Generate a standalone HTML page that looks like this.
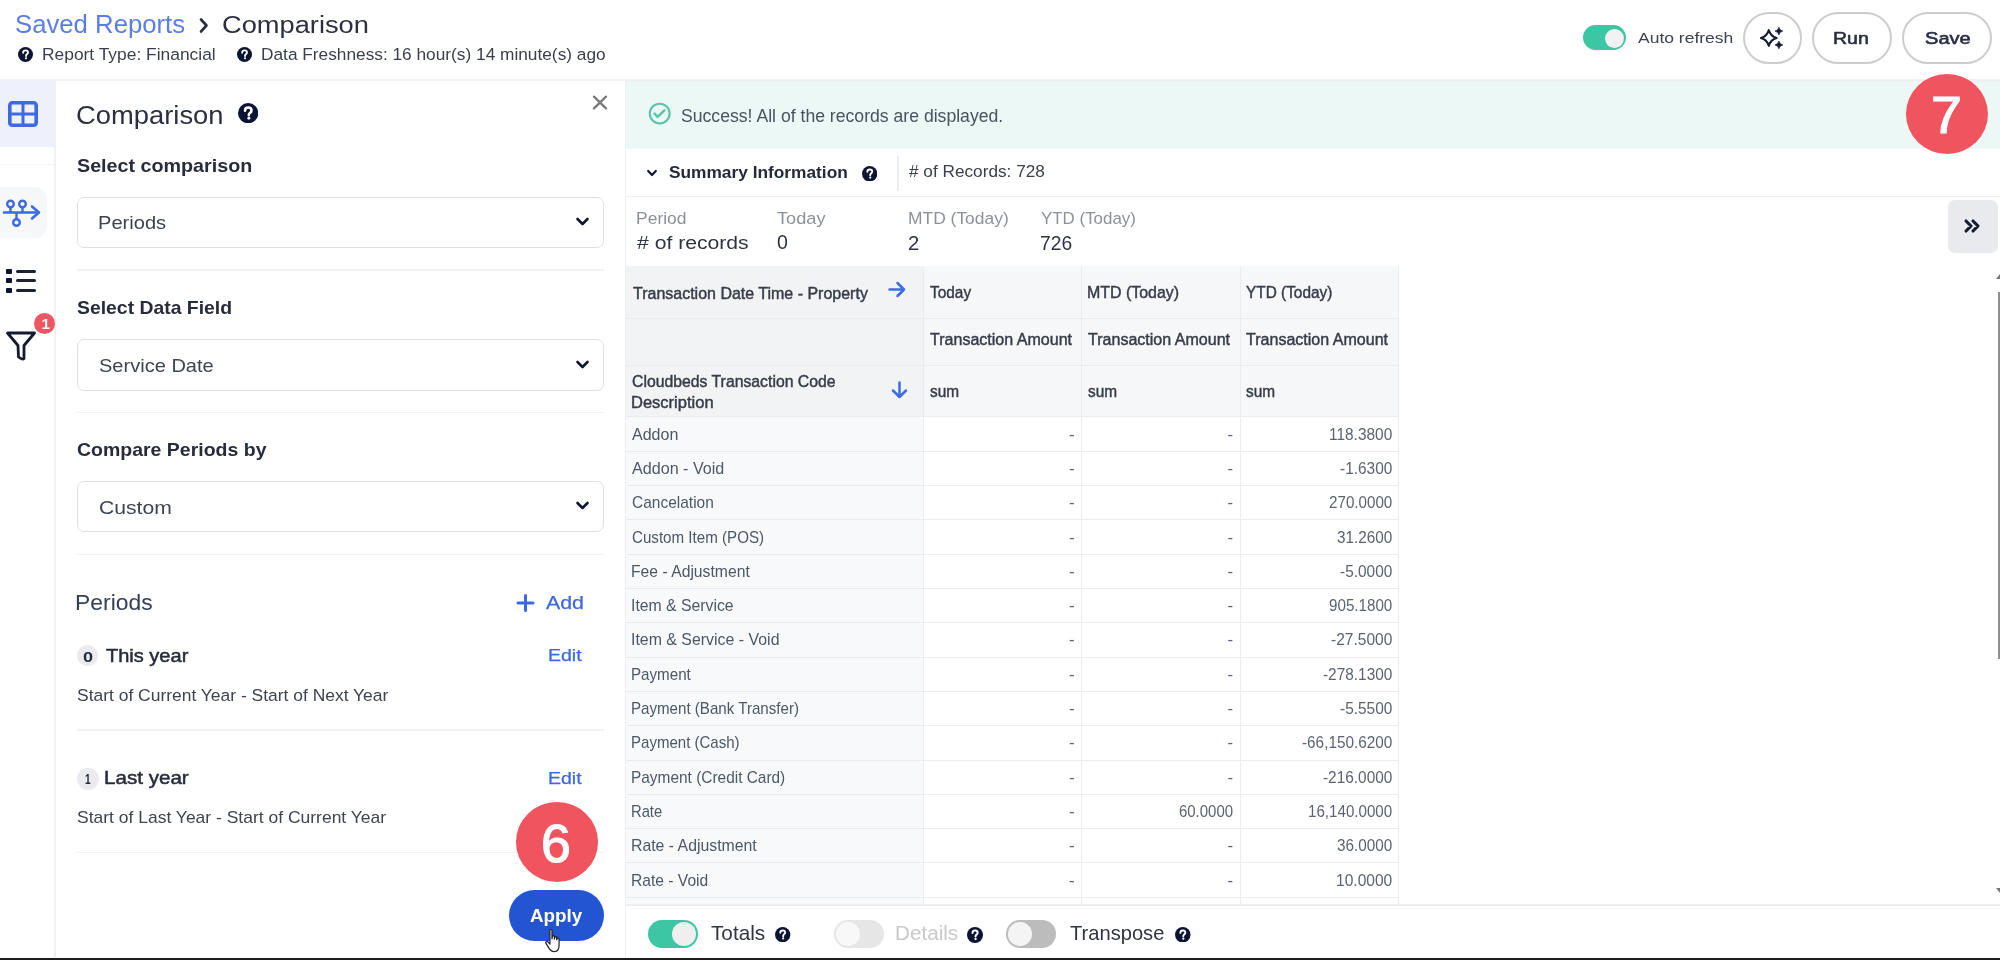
<!DOCTYPE html>
<html><head><meta charset="utf-8"><title>Comparison</title>
<style>
html,body{margin:0;padding:0;background:#fff;}
body{width:2000px;height:960px;position:relative;overflow:hidden;font-family:"Liberation Sans",sans-serif;}
#root{position:absolute;left:0;top:0;width:2000px;height:960px;filter:blur(0.45px);}
.t{position:absolute;white-space:nowrap;}
</style></head><body><div id="root">
<svg style="position:absolute;left:198px;top:17px" width="12" height="17" viewBox="0 0 12 17"><path d="M3 2.5 L8.5 8.5 L3 14.5" fill="none" stroke="#2a2f3b" stroke-width="2.6" stroke-linecap="round" stroke-linejoin="round"/></svg>
<svg style="position:absolute;left:18px;top:46.5px" width="15" height="15" viewBox="0 0 20 20">
<circle cx="10" cy="10" r="10" fill="#0b1433"/>
<path d="M6.9 7.6 C6.9 5.6 8.3 4.5 10.1 4.5 C12 4.5 13.3 5.6 13.3 7.3 C13.3 8.6 12.5 9.3 11.6 9.9 C10.9 10.4 10.7 10.7 10.7 11.5 L10.7 12" fill="none" stroke="#fff" stroke-width="2.5" stroke-linecap="round"/>
<circle cx="10.7" cy="15" r="1.45" fill="#fff"/>
</svg>
<svg style="position:absolute;left:236.5px;top:46.5px" width="15" height="15" viewBox="0 0 20 20">
<circle cx="10" cy="10" r="10" fill="#0b1433"/>
<path d="M6.9 7.6 C6.9 5.6 8.3 4.5 10.1 4.5 C12 4.5 13.3 5.6 13.3 7.3 C13.3 8.6 12.5 9.3 11.6 9.9 C10.9 10.4 10.7 10.7 10.7 11.5 L10.7 12" fill="none" stroke="#fff" stroke-width="2.5" stroke-linecap="round"/>
<circle cx="10.7" cy="15" r="1.45" fill="#fff"/>
</svg>
<div style="position:absolute;left:1583px;top:25px;width:43px;height:25px;background:#3cc6a4;border-radius:13px"></div>
<div style="position:absolute;left:1604.5px;top:28.5px;width:19.0px;height:19.0px;background:#f2f2f2;border-radius:50%"></div>
<div style="position:absolute;left:1743px;top:11.5px;width:59px;height:52.5px;border:2px solid #cdcdcd;border-radius:30px;box-sizing:border-box"></div>
<svg style="position:absolute;left:1757px;top:26px" width="28" height="26" viewBox="0 0 28 26">
<path d="M11.8 4.2 Q13.6 10.2 19.6 12 Q13.6 13.8 11.8 19.8 Q10 13.8 4 12 Q10 10.2 11.8 4.2 Z" fill="none" stroke="#141b33" stroke-width="2.2" stroke-linejoin="round"/>
<path d="M21.9 1.3 Q22.5 4.5 25.7 5.1 Q22.5 5.7 21.9 8.9 Q21.3 5.7 18.1 5.1 Q21.3 4.5 21.9 1.3 Z" fill="#141b33" stroke="#141b33" stroke-width="0.8" stroke-linejoin="round"/>
<path d="M21.9 15.1 Q22.5 18.3 25.7 18.9 Q22.5 19.5 21.9 22.7 Q21.3 19.5 18.1 18.9 Q21.3 18.3 21.9 15.1 Z" fill="#141b33" stroke="#141b33" stroke-width="0.8" stroke-linejoin="round"/>
</svg>
<div style="position:absolute;left:1811.5px;top:11.5px;width:80.0px;height:52.5px;border:2px solid #cdcdcd;border-radius:27px;box-sizing:border-box"></div>
<div style="position:absolute;left:1902px;top:11.5px;width:89.5px;height:52.5px;border:2px solid #cdcdcd;border-radius:27px;box-sizing:border-box"></div>
<div style="position:absolute;left:0px;top:79px;width:2000px;height:2px;background:#f1f2f4"></div>
<div style="position:absolute;left:0px;top:81px;width:54px;height:66px;background:#eef1fb"></div>
<div style="position:absolute;left:54px;top:81px;width:1.5px;height:876px;background:#f0f1f3"></div>
<div style="position:absolute;left:0px;top:163.5px;width:54px;height:1.5px;background:#f2f3f5"></div>
<svg style="position:absolute;left:7px;top:100px" width="32" height="28" viewBox="0 0 32 28">
<rect x="2.8" y="2.8" width="26.4" height="22.4" rx="2.5" fill="none" stroke="#3d6ae3" stroke-width="3.6"/>
<line x1="16" y1="3" x2="16" y2="25" stroke="#3d6ae3" stroke-width="3"/>
<line x1="3" y1="14" x2="29" y2="14" stroke="#3d6ae3" stroke-width="3"/>
</svg>
<div style="position:absolute;left:0px;top:187px;width:47px;height:51px;background:#f6f7f9;border-radius:0 12px 12px 0"></div>
<svg style="position:absolute;left:2px;top:198px" width="40" height="32" viewBox="0 0 40 32">
<line x1="2" y1="14.5" x2="36" y2="14.5" stroke="#3d6ae3" stroke-width="2.6" stroke-linecap="round"/>
<path d="M30 8.5 L37 14.5 L30 20.5" fill="none" stroke="#3d6ae3" stroke-width="2.6" stroke-linecap="round" stroke-linejoin="round"/>
<circle cx="8.5" cy="6" r="3.3" fill="none" stroke="#3d6ae3" stroke-width="2.4"/>
<circle cx="20.5" cy="6" r="3.3" fill="none" stroke="#3d6ae3" stroke-width="2.4"/>
<circle cx="14.5" cy="24.5" r="3.3" fill="none" stroke="#3d6ae3" stroke-width="2.4"/>
<line x1="8.5" y1="9" x2="8.5" y2="14.5" stroke="#3d6ae3" stroke-width="2.4"/>
<line x1="20.5" y1="9" x2="20.5" y2="14.5" stroke="#3d6ae3" stroke-width="2.4"/>
<line x1="14.5" y1="14.5" x2="14.5" y2="21" stroke="#3d6ae3" stroke-width="2.4"/>
</svg>
<div style="position:absolute;left:6px;top:268.5px;width:5.5px;height:5.0px;background:#0d1430;border-radius:1px"></div>
<div style="position:absolute;left:15.5px;top:269.5px;width:20.5px;height:3.0px;background:#1b2236;border-radius:1.5px"></div>
<div style="position:absolute;left:6px;top:277.5px;width:5.5px;height:5.0px;background:#0d1430;border-radius:1px"></div>
<div style="position:absolute;left:15.5px;top:278.5px;width:20.5px;height:3.0px;background:#1b2236;border-radius:1.5px"></div>
<div style="position:absolute;left:6px;top:287.5px;width:5.5px;height:5.0px;background:#0d1430;border-radius:1px"></div>
<div style="position:absolute;left:15.5px;top:288.5px;width:20.5px;height:3.0px;background:#1b2236;border-radius:1.5px"></div>
<svg style="position:absolute;left:5px;top:330px" width="32" height="32" viewBox="0 0 32 32">
<path d="M2.5 3 L29.5 3 L19 15.5 L19 28.5 Q17.5 30 13.5 27 L13 15.5 Z" fill="none" stroke="#141b30" stroke-width="2.8" stroke-linejoin="round"/>
</svg>
<div style="position:absolute;left:33.8px;top:312.8px;width:21.0px;height:21.0px;background:#ee5661;border-radius:50%"></div>
<svg style="position:absolute;left:237.6px;top:102.5px" width="20.3" height="20.3" viewBox="0 0 20 20">
<circle cx="10" cy="10" r="10" fill="#0b1433"/>
<path d="M6.9 7.6 C6.9 5.6 8.3 4.5 10.1 4.5 C12 4.5 13.3 5.6 13.3 7.3 C13.3 8.6 12.5 9.3 11.6 9.9 C10.9 10.4 10.7 10.7 10.7 11.5 L10.7 12" fill="none" stroke="#fff" stroke-width="2.5" stroke-linecap="round"/>
<circle cx="10.7" cy="15" r="1.45" fill="#fff"/>
</svg>
<svg style="position:absolute;left:591px;top:94px" width="17" height="16" viewBox="0 0 17 16"><path d="M3 2.6 L15 14.4 M15 2.6 L3 14.4" stroke="#7a7a7c" stroke-width="2.3" stroke-linecap="round"/></svg>
<div style="position:absolute;left:76.5px;top:196.5px;width:527.0px;height:51.5px;border:1.5px solid #dfe0e3;border-radius:7px;box-sizing:border-box"></div>
<svg style="position:absolute;left:575px;top:216.2px" width="15" height="11" viewBox="0 0 15 11"><path d="M2.5 3 L7.5 8 L12.5 3" fill="none" stroke="#101733" stroke-width="2.6" stroke-linecap="round" stroke-linejoin="round"/></svg>
<div style="position:absolute;left:77px;top:269.25px;width:527px;height:1.5px;background:#f1f2f4"></div>
<div style="position:absolute;left:76.5px;top:338.5px;width:527.0px;height:52.5px;border:1.5px solid #dfe0e3;border-radius:7px;box-sizing:border-box"></div>
<svg style="position:absolute;left:575px;top:358.8px" width="15" height="11" viewBox="0 0 15 11"><path d="M2.5 3 L7.5 8 L12.5 3" fill="none" stroke="#101733" stroke-width="2.6" stroke-linecap="round" stroke-linejoin="round"/></svg>
<div style="position:absolute;left:77px;top:411.85px;width:527px;height:1.5px;background:#f1f2f4"></div>
<div style="position:absolute;left:76.5px;top:480.6px;width:527.0px;height:51.60000000000002px;border:1.5px solid #dfe0e3;border-radius:7px;box-sizing:border-box"></div>
<svg style="position:absolute;left:575px;top:500.4px" width="15" height="11" viewBox="0 0 15 11"><path d="M2.5 3 L7.5 8 L12.5 3" fill="none" stroke="#101733" stroke-width="2.6" stroke-linecap="round" stroke-linejoin="round"/></svg>
<div style="position:absolute;left:77px;top:553.65px;width:527px;height:1.5px;background:#f1f2f4"></div>
<svg style="position:absolute;left:516px;top:594px" width="19" height="18" viewBox="0 0 19 18"><path d="M9.5 1.5 L9.5 16.5 M2 9 L17 9" stroke="#3d66e4" stroke-width="3" stroke-linecap="round"/></svg>
<div style="position:absolute;left:77px;top:645px;width:21.299999999999997px;height:21px;background:#ebebef;border-radius:50%"></div>
<div style="position:absolute;left:77px;top:729px;width:527px;height:1.5px;background:#f1f2f4"></div>
<div style="position:absolute;left:77px;top:767.6px;width:21.700000000000003px;height:22.399999999999977px;background:#ebebef;border-radius:50%"></div>
<div style="position:absolute;left:77px;top:851.5px;width:527px;height:1.5px;background:#f1f2f4"></div>
<div style="position:absolute;left:508.6px;top:890px;width:95.60000000000002px;height:51.39999999999998px;background:#2355d3;border-radius:26px"></div>
<div style="position:absolute;left:624.5px;top:81px;width:1.5px;height:876px;background:#eceef0"></div>
<div style="position:absolute;left:626px;top:79.5px;width:1374px;height:2.5px;background:#eff0f1"></div>
<div style="position:absolute;left:626px;top:82px;width:1374px;height:67px;background:#ebf8f5"></div>
<svg style="position:absolute;left:647.5px;top:102.3px" width="24" height="24" viewBox="0 0 24 24"><circle cx="11.7" cy="11.6" r="9.9" fill="none" stroke="#5cc3aa" stroke-width="2.1"/><path d="M6.6 11.6 L9.6 14.9 L16.4 8.4" fill="none" stroke="#5cc3aa" stroke-width="2.5" stroke-linecap="round" stroke-linejoin="round"/></svg>
<svg style="position:absolute;left:646px;top:168px" width="12" height="11" viewBox="0 0 12 11"><path d="M2.2 3 L6 7 L9.8 3" fill="none" stroke="#141b33" stroke-width="2.3" stroke-linecap="round" stroke-linejoin="round"/></svg>
<svg style="position:absolute;left:861.8px;top:166px" width="15.4" height="15.4" viewBox="0 0 20 20">
<circle cx="10" cy="10" r="10" fill="#0b1433"/>
<path d="M6.9 7.6 C6.9 5.6 8.3 4.5 10.1 4.5 C12 4.5 13.3 5.6 13.3 7.3 C13.3 8.6 12.5 9.3 11.6 9.9 C10.9 10.4 10.7 10.7 10.7 11.5 L10.7 12" fill="none" stroke="#fff" stroke-width="2.5" stroke-linecap="round"/>
<circle cx="10.7" cy="15" r="1.45" fill="#fff"/>
</svg>
<div style="position:absolute;left:897px;top:155.6px;width:1.5px;height:35.70000000000002px;background:#ececee"></div>
<div style="position:absolute;left:626px;top:195.5px;width:1374px;height:1.5px;background:#eeeff1"></div>
<div style="position:absolute;left:1948px;top:200px;width:50px;height:53px;background:#e9eaee;border-radius:7px"></div>
<svg style="position:absolute;left:1963px;top:218px" width="19" height="16" viewBox="0 0 19 16"><path d="M3 3 L8 8 L3 13 M10 3 L15 8 L10 13" fill="none" stroke="#141b33" stroke-width="3.1" stroke-linecap="round" stroke-linejoin="round"/></svg>
<div style="position:absolute;left:625.5px;top:266px;width:772.5px;height:151px;background:#f6f7f9"></div>
<div style="position:absolute;left:625.5px;top:266px;width:297.5px;height:151px;background:#f2f3f5"></div>
<div style="position:absolute;left:625.5px;top:417px;width:297.5px;height:488px;background:#f8f9fb"></div>
<div style="position:absolute;left:625.5px;top:317.5px;width:772.5px;height:1.0px;background:#eaecef"></div>
<div style="position:absolute;left:625.5px;top:364.5px;width:772.5px;height:1.0px;background:#eaecef"></div>
<div style="position:absolute;left:625.5px;top:416.0px;width:772.5px;height:1.0px;background:#eaecef"></div>
<div style="position:absolute;left:625.5px;top:450.8px;width:772.5px;height:1.0px;background:#eaecef"></div>
<div style="position:absolute;left:625.5px;top:485.1px;width:772.5px;height:1.0px;background:#eaecef"></div>
<div style="position:absolute;left:625.5px;top:519.4px;width:772.5px;height:1.0px;background:#eaecef"></div>
<div style="position:absolute;left:625.5px;top:553.7px;width:772.5px;height:1.0px;background:#eaecef"></div>
<div style="position:absolute;left:625.5px;top:588.0px;width:772.5px;height:1.0px;background:#eaecef"></div>
<div style="position:absolute;left:625.5px;top:622.3px;width:772.5px;height:1.0px;background:#eaecef"></div>
<div style="position:absolute;left:625.5px;top:656.5999999999999px;width:772.5px;height:1.0px;background:#eaecef"></div>
<div style="position:absolute;left:625.5px;top:690.9px;width:772.5px;height:1.0px;background:#eaecef"></div>
<div style="position:absolute;left:625.5px;top:725.2px;width:772.5px;height:1.0px;background:#eaecef"></div>
<div style="position:absolute;left:625.5px;top:759.5px;width:772.5px;height:1.0px;background:#eaecef"></div>
<div style="position:absolute;left:625.5px;top:793.8px;width:772.5px;height:1.0px;background:#eaecef"></div>
<div style="position:absolute;left:625.5px;top:828.0999999999999px;width:772.5px;height:1.0px;background:#eaecef"></div>
<div style="position:absolute;left:625.5px;top:862.4px;width:772.5px;height:1.0px;background:#eaecef"></div>
<div style="position:absolute;left:625.5px;top:896.6999999999999px;width:772.5px;height:1.0px;background:#eaecef"></div>
<div style="position:absolute;left:922.5px;top:266px;width:1.0px;height:639px;background:#eaecef"></div>
<div style="position:absolute;left:1080.5px;top:266px;width:1.0px;height:639px;background:#eaecef"></div>
<div style="position:absolute;left:1239.5px;top:266px;width:1.0px;height:639px;background:#eaecef"></div>
<div style="position:absolute;left:1397.5px;top:266px;width:1.0px;height:639px;background:#eaecef"></div>
<svg style="position:absolute;left:886px;top:280px" width="21" height="19" viewBox="0 0 21 19"><path d="M3.5 9.5 L18 9.5 M11.5 3 L18 9.5 L11.5 16" fill="none" stroke="#3d6de6" stroke-width="2.5" stroke-linecap="round" stroke-linejoin="round"/></svg>
<svg style="position:absolute;left:890px;top:379px" width="19" height="21" viewBox="0 0 19 21"><path d="M9.5 3.5 L9.5 18 M3 11.5 L9.5 18 L16 11.5" fill="none" stroke="#3d6de6" stroke-width="2.5" stroke-linecap="round" stroke-linejoin="round"/></svg>
<div style="position:absolute;left:626px;top:904px;width:1374px;height:1.5px;background:#eceef0"></div>
<div style="position:absolute;left:647.7px;top:920px;width:50.299999999999955px;height:28.299999999999955px;background:#3cc6a4;border-radius:15px"></div>
<div style="position:absolute;left:672.3px;top:922.3px;width:24.0px;height:24.0px;background:#efefef;border-radius:50%"></div>
<svg style="position:absolute;left:775.3px;top:926.5px" width="15.3" height="15.3" viewBox="0 0 20 20">
<circle cx="10" cy="10" r="10" fill="#0b1433"/>
<path d="M6.9 7.6 C6.9 5.6 8.3 4.5 10.1 4.5 C12 4.5 13.3 5.6 13.3 7.3 C13.3 8.6 12.5 9.3 11.6 9.9 C10.9 10.4 10.7 10.7 10.7 11.5 L10.7 12" fill="none" stroke="#fff" stroke-width="2.5" stroke-linecap="round"/>
<circle cx="10.7" cy="15" r="1.45" fill="#fff"/>
</svg>
<div style="position:absolute;left:833.6px;top:920px;width:50.0px;height:28px;background:#e6e6e6;border-radius:14px"></div>
<div style="position:absolute;left:836px;top:922.2px;width:23.600000000000023px;height:23.59999999999991px;background:#f8f8f8;border-radius:50%"></div>
<svg style="position:absolute;left:967px;top:926.5px" width="16" height="16" viewBox="0 0 20 20">
<circle cx="10" cy="10" r="10" fill="#0b1433"/>
<path d="M6.9 7.6 C6.9 5.6 8.3 4.5 10.1 4.5 C12 4.5 13.3 5.6 13.3 7.3 C13.3 8.6 12.5 9.3 11.6 9.9 C10.9 10.4 10.7 10.7 10.7 11.5 L10.7 12" fill="none" stroke="#fff" stroke-width="2.5" stroke-linecap="round"/>
<circle cx="10.7" cy="15" r="1.45" fill="#fff"/>
</svg>
<div style="position:absolute;left:1006px;top:920px;width:50px;height:28px;background:#bcbcbc;border-radius:14px"></div>
<div style="position:absolute;left:1008.4px;top:922.2px;width:23.600000000000023px;height:23.59999999999991px;background:#f4f4f4;border-radius:50%"></div>
<svg style="position:absolute;left:1175px;top:926.5px" width="15.5" height="15.5" viewBox="0 0 20 20">
<circle cx="10" cy="10" r="10" fill="#0b1433"/>
<path d="M6.9 7.6 C6.9 5.6 8.3 4.5 10.1 4.5 C12 4.5 13.3 5.6 13.3 7.3 C13.3 8.6 12.5 9.3 11.6 9.9 C10.9 10.4 10.7 10.7 10.7 11.5 L10.7 12" fill="none" stroke="#fff" stroke-width="2.5" stroke-linecap="round"/>
<circle cx="10.7" cy="15" r="1.45" fill="#fff"/>
</svg>
<div style="position:absolute;left:1997.5px;top:292px;width:2.5px;height:367px;background:#8e8e8e"></div>
<svg style="position:absolute;left:1994px;top:273px" width="6" height="8" viewBox="0 0 6 8"><path d="M6 1 L2 6 L6 6 Z" fill="#777"/></svg>
<svg style="position:absolute;left:1994px;top:886px" width="6" height="8" viewBox="0 0 6 8"><path d="M6 7 L2 2 L6 2 Z" fill="#777"/></svg>
<div style="position:absolute;left:0px;top:957.5px;width:2000px;height:2.5px;background:#1c1c1c"></div>
<div class="t" style="left:14.57px;top:11.81px;font-size:24.93px;line-height:24.93px;font-weight:400;color:#5b7de6;transform:scaleX(1.0319);transform-origin:0 0;">Saved Reports</div>
<div class="t" style="left:221.89px;top:12.52px;font-size:24.64px;line-height:24.64px;font-weight:400;color:#2a3040;transform:scaleX(1.1064);transform-origin:0 0;">Comparison</div>
<div class="t" style="left:41.61px;top:47.01px;font-size:15.94px;line-height:15.94px;font-weight:400;color:#3a3f4b;transform:scaleX(1.0911);transform-origin:0 0;">Report Type: Financial</div>
<div class="t" style="left:260.92px;top:46.76px;font-size:15.94px;line-height:15.94px;font-weight:400;color:#3a3f4b;transform:scaleX(1.0837);transform-origin:0 0;">Data Freshness: 16 hour(s) 14 minute(s) ago</div>
<div class="t" style="left:1637.80px;top:30.61px;font-size:14.78px;line-height:14.78px;font-weight:400;color:#3b4250;transform:scaleX(1.1842);transform-origin:0 0;">Auto refresh</div>
<div class="t" style="left:1833.37px;top:30.01px;font-size:17.39px;line-height:17.39px;font-weight:400;color:#283044;transform:scaleX(1.1254);transform-origin:0 0;-webkit-text-stroke:0.6px #283044;">Run</div>
<div class="t" style="left:1924.50px;top:30.01px;font-size:17.39px;line-height:17.39px;font-weight:400;color:#283044;transform:scaleX(1.1556);transform-origin:0 0;-webkit-text-stroke:0.6px #283044;">Save</div>
<div class="t" style="left:41.50px;top:315.51px;font-size:15.22px;line-height:15.22px;font-weight:700;color:#fff;">1</div>
<div class="t" style="left:76.10px;top:102.51px;font-size:24.93px;line-height:24.93px;font-weight:400;color:#2a3040;transform:scaleX(1.0980);transform-origin:0 0;">Comparison</div>
<div class="t" style="left:77.00px;top:156.01px;font-size:19.13px;line-height:19.13px;font-weight:700;color:#262c3a;transform:scaleX(1.0314);transform-origin:0 0;">Select comparison</div>
<div class="t" style="left:97.73px;top:214.00px;font-size:18.84px;line-height:18.84px;font-weight:400;color:#3d4451;transform:scaleX(1.0669);transform-origin:0 0;">Periods</div>
<div class="t" style="left:77.00px;top:298.41px;font-size:19.13px;line-height:19.13px;font-weight:700;color:#262c3a;transform:scaleX(1.0140);transform-origin:0 0;">Select Data Field</div>
<div class="t" style="left:98.80px;top:356.81px;font-size:18.84px;line-height:18.84px;font-weight:400;color:#3d4451;transform:scaleX(1.0642);transform-origin:0 0;">Service Date</div>
<div class="t" style="left:77.00px;top:440.41px;font-size:19.13px;line-height:19.13px;font-weight:700;color:#262c3a;transform:scaleX(1.0196);transform-origin:0 0;">Compare Periods by</div>
<div class="t" style="left:98.80px;top:498.81px;font-size:18.84px;line-height:18.84px;font-weight:400;color:#3d4451;transform:scaleX(1.1218);transform-origin:0 0;">Custom</div>
<div class="t" style="left:75.37px;top:592.31px;font-size:22.17px;line-height:22.17px;font-weight:400;color:#344054;transform:scaleX(1.0345);transform-origin:0 0;">Periods</div>
<div class="t" style="left:545.60px;top:594.00px;font-size:18.12px;line-height:18.12px;font-weight:400;color:#3d66e4;transform:scaleX(1.1782);transform-origin:0 0;-webkit-text-stroke:0.25px #3d66e4;">Add</div>
<div class="t" style="left:83.40px;top:649.91px;font-size:14.93px;line-height:14.93px;font-weight:700;color:#262c3a;transform:scaleX(1.2125);transform-origin:0 0;">0</div>
<div class="t" style="left:106.00px;top:647.00px;font-size:18.84px;line-height:18.84px;font-weight:400;color:#262c3a;transform:scaleX(1.0628);transform-origin:0 0;-webkit-text-stroke:0.5px #262c3a;">This year</div>
<div class="t" style="left:548.35px;top:648.40px;font-size:16.96px;line-height:16.96px;font-weight:400;color:#3d66e4;transform:scaleX(1.1517);transform-origin:0 0;-webkit-text-stroke:0.25px #3d66e4;">Edit</div>
<div class="t" style="left:76.60px;top:688.01px;font-size:16.67px;line-height:16.67px;font-weight:400;color:#3d4350;transform:scaleX(1.0474);transform-origin:0 0;">Start of Current Year - Start of Next Year</div>
<div class="t" style="left:85.20px;top:772.00px;font-size:14.93px;line-height:14.93px;font-weight:700;color:#262c3a;transform:scaleX(0.6750);transform-origin:0 0;">1</div>
<div class="t" style="left:104.31px;top:769.20px;font-size:18.84px;line-height:18.84px;font-weight:400;color:#262c3a;transform:scaleX(1.0935);transform-origin:0 0;-webkit-text-stroke:0.5px #262c3a;">Last year</div>
<div class="t" style="left:548.35px;top:770.81px;font-size:16.96px;line-height:16.96px;font-weight:400;color:#3d66e4;transform:scaleX(1.1517);transform-origin:0 0;-webkit-text-stroke:0.25px #3d66e4;">Edit</div>
<div class="t" style="left:76.60px;top:810.40px;font-size:16.96px;line-height:16.96px;font-weight:400;color:#3d4350;transform:scaleX(1.0324);transform-origin:0 0;">Start of Last Year - Start of Current Year</div>
<div class="t" style="left:529.80px;top:907.00px;font-size:18.12px;line-height:18.12px;font-weight:700;color:#ffffff;transform:scaleX(1.0392);transform-origin:0 0;">Apply</div>
<div class="t" style="left:681.30px;top:107.51px;font-size:17.68px;line-height:17.68px;font-weight:400;color:#4a5260;transform:scaleX(0.9971);transform-origin:0 0;">Success! All of the records are displayed.</div>
<div class="t" style="left:668.50px;top:165.01px;font-size:15.94px;line-height:15.94px;font-weight:700;color:#232a3b;transform:scaleX(1.0855);transform-origin:0 0;">Summary Information</div>
<div class="t" style="left:909.40px;top:163.30px;font-size:17.39px;line-height:17.39px;font-weight:400;color:#3a404c;transform:scaleX(0.9906);transform-origin:0 0;"># of Records: 728</div>
<div class="t" style="left:635.70px;top:211.40px;font-size:15.94px;line-height:15.94px;font-weight:400;color:#8b909b;transform:scaleX(1.0971);transform-origin:0 0;">Period</div>
<div class="t" style="left:777.30px;top:211.40px;font-size:15.94px;line-height:15.94px;font-weight:400;color:#8b909b;transform:scaleX(1.1396);transform-origin:0 0;">Today</div>
<div class="t" style="left:907.61px;top:211.40px;font-size:15.94px;line-height:15.94px;font-weight:400;color:#8b909b;transform:scaleX(1.0938);transform-origin:0 0;">MTD (Today)</div>
<div class="t" style="left:1041.00px;top:211.40px;font-size:15.94px;line-height:15.94px;font-weight:400;color:#8b909b;transform:scaleX(1.0613);transform-origin:0 0;">YTD (Today)</div>
<div class="t" style="left:637.00px;top:234.20px;font-size:18.12px;line-height:18.12px;font-weight:400;color:#2e3441;transform:scaleX(1.1678);transform-origin:0 0;"># of records</div>
<div class="t" style="left:777.00px;top:233.21px;font-size:19.57px;line-height:19.57px;font-weight:400;color:#2e3441;">0</div>
<div class="t" style="left:908.00px;top:233.01px;font-size:20.29px;line-height:20.29px;font-weight:400;color:#2e3441;">2</div>
<div class="t" style="left:1040.05px;top:233.01px;font-size:20.29px;line-height:20.29px;font-weight:400;color:#2e3441;transform:scaleX(0.9496);transform-origin:0 0;">726</div>
<div class="t" style="left:632.50px;top:285.51px;font-size:16.67px;line-height:16.67px;font-weight:400;color:#363c48;transform:scaleX(0.9599);transform-origin:0 0;-webkit-text-stroke:0.45px #363c48;">Transaction Date Time - Property</div>
<div class="t" style="left:930.20px;top:284.51px;font-size:16.67px;line-height:16.67px;font-weight:400;color:#363c48;transform:scaleX(0.9242);transform-origin:0 0;-webkit-text-stroke:0.45px #363c48;">Today</div>
<div class="t" style="left:1087.04px;top:284.51px;font-size:16.67px;line-height:16.67px;font-weight:400;color:#363c48;transform:scaleX(0.9567);transform-origin:0 0;-webkit-text-stroke:0.45px #363c48;">MTD (Today)</div>
<div class="t" style="left:1246.20px;top:284.51px;font-size:16.67px;line-height:16.67px;font-weight:400;color:#363c48;transform:scaleX(0.9232);transform-origin:0 0;-webkit-text-stroke:0.45px #363c48;">YTD (Today)</div>
<div class="t" style="left:930.00px;top:332.41px;font-size:16.67px;line-height:16.67px;font-weight:400;color:#363c48;transform:scaleX(0.9630);transform-origin:0 0;-webkit-text-stroke:0.45px #363c48;">Transaction Amount</div>
<div class="t" style="left:930.00px;top:383.51px;font-size:16.67px;line-height:16.67px;font-weight:400;color:#363c48;transform:scaleX(0.9251);transform-origin:0 0;-webkit-text-stroke:0.45px #363c48;">sum</div>
<div class="t" style="left:1088.00px;top:332.41px;font-size:16.67px;line-height:16.67px;font-weight:400;color:#363c48;transform:scaleX(0.9630);transform-origin:0 0;-webkit-text-stroke:0.45px #363c48;">Transaction Amount</div>
<div class="t" style="left:1088.00px;top:383.51px;font-size:16.67px;line-height:16.67px;font-weight:400;color:#363c48;transform:scaleX(0.9251);transform-origin:0 0;-webkit-text-stroke:0.45px #363c48;">sum</div>
<div class="t" style="left:1246.00px;top:332.41px;font-size:16.67px;line-height:16.67px;font-weight:400;color:#363c48;transform:scaleX(0.9630);transform-origin:0 0;-webkit-text-stroke:0.45px #363c48;">Transaction Amount</div>
<div class="t" style="left:1246.00px;top:383.51px;font-size:16.67px;line-height:16.67px;font-weight:400;color:#363c48;transform:scaleX(0.9251);transform-origin:0 0;-webkit-text-stroke:0.45px #363c48;">sum</div>
<div class="t" style="left:632.00px;top:374.01px;font-size:16.67px;line-height:16.67px;font-weight:400;color:#363c48;transform:scaleX(0.9476);transform-origin:0 0;-webkit-text-stroke:0.45px #363c48;">Cloudbeds Transaction Code</div>
<div class="t" style="left:631.01px;top:395.01px;font-size:16.67px;line-height:16.67px;font-weight:400;color:#363c48;transform:scaleX(0.9909);transform-origin:0 0;-webkit-text-stroke:0.45px #363c48;">Description</div>
<div class="t" style="left:632.00px;top:426.61px;font-size:16.81px;line-height:16.81px;font-weight:400;color:#4b5868;transform:scaleX(0.9538);transform-origin:0 0;">Addon</div>
<div class="t" style="left:1069.00px;top:426.61px;font-size:16.81px;line-height:16.81px;font-weight:400;color:#5a6472;">-</div>
<div class="t" style="left:1227.50px;top:426.61px;font-size:16.81px;line-height:16.81px;font-weight:400;color:#5a6472;">-</div>
<div class="t" style="left:1329.08px;top:426.61px;font-size:16.81px;line-height:16.81px;font-weight:400;color:#5a6472;transform:scaleX(0.9189);transform-origin:0 0;">118.3800</div>
<div class="t" style="left:632.00px;top:460.91px;font-size:16.81px;line-height:16.81px;font-weight:400;color:#4b5868;transform:scaleX(0.9599);transform-origin:0 0;">Addon - Void</div>
<div class="t" style="left:1069.00px;top:460.91px;font-size:16.81px;line-height:16.81px;font-weight:400;color:#5a6472;">-</div>
<div class="t" style="left:1227.50px;top:460.91px;font-size:16.81px;line-height:16.81px;font-weight:400;color:#5a6472;">-</div>
<div class="t" style="left:1340.00px;top:460.91px;font-size:16.81px;line-height:16.81px;font-weight:400;color:#5a6472;transform:scaleX(0.9183);transform-origin:0 0;">-1.6300</div>
<div class="t" style="left:632.00px;top:495.20px;font-size:16.81px;line-height:16.81px;font-weight:400;color:#4b5868;transform:scaleX(0.9223);transform-origin:0 0;">Cancelation</div>
<div class="t" style="left:1069.00px;top:495.20px;font-size:16.81px;line-height:16.81px;font-weight:400;color:#5a6472;">-</div>
<div class="t" style="left:1227.50px;top:495.20px;font-size:16.81px;line-height:16.81px;font-weight:400;color:#5a6472;">-</div>
<div class="t" style="left:1329.00px;top:495.20px;font-size:16.81px;line-height:16.81px;font-weight:400;color:#5a6472;transform:scaleX(0.9037);transform-origin:0 0;">270.0000</div>
<div class="t" style="left:632.00px;top:529.50px;font-size:16.81px;line-height:16.81px;font-weight:400;color:#4b5868;transform:scaleX(0.9011);transform-origin:0 0;">Custom Item (POS)</div>
<div class="t" style="left:1069.00px;top:529.50px;font-size:16.81px;line-height:16.81px;font-weight:400;color:#5a6472;">-</div>
<div class="t" style="left:1227.50px;top:529.50px;font-size:16.81px;line-height:16.81px;font-weight:400;color:#5a6472;">-</div>
<div class="t" style="left:1337.00px;top:529.50px;font-size:16.81px;line-height:16.81px;font-weight:400;color:#5a6472;transform:scaleX(0.9110);transform-origin:0 0;">31.2600</div>
<div class="t" style="left:631.06px;top:563.81px;font-size:16.81px;line-height:16.81px;font-weight:400;color:#4b5868;transform:scaleX(0.9353);transform-origin:0 0;">Fee - Adjustment</div>
<div class="t" style="left:1069.00px;top:563.81px;font-size:16.81px;line-height:16.81px;font-weight:400;color:#5a6472;">-</div>
<div class="t" style="left:1227.50px;top:563.81px;font-size:16.81px;line-height:16.81px;font-weight:400;color:#5a6472;">-</div>
<div class="t" style="left:1340.00px;top:563.81px;font-size:16.81px;line-height:16.81px;font-weight:400;color:#5a6472;transform:scaleX(0.9183);transform-origin:0 0;">-5.0000</div>
<div class="t" style="left:631.06px;top:598.11px;font-size:16.81px;line-height:16.81px;font-weight:400;color:#4b5868;transform:scaleX(0.9391);transform-origin:0 0;">Item &amp; Service</div>
<div class="t" style="left:1069.00px;top:598.11px;font-size:16.81px;line-height:16.81px;font-weight:400;color:#5a6472;">-</div>
<div class="t" style="left:1227.50px;top:598.11px;font-size:16.81px;line-height:16.81px;font-weight:400;color:#5a6472;">-</div>
<div class="t" style="left:1329.00px;top:598.11px;font-size:16.81px;line-height:16.81px;font-weight:400;color:#5a6472;transform:scaleX(0.9037);transform-origin:0 0;">905.1800</div>
<div class="t" style="left:631.05px;top:632.41px;font-size:16.81px;line-height:16.81px;font-weight:400;color:#4b5868;transform:scaleX(0.9467);transform-origin:0 0;">Item &amp; Service - Void</div>
<div class="t" style="left:1069.00px;top:632.41px;font-size:16.81px;line-height:16.81px;font-weight:400;color:#5a6472;">-</div>
<div class="t" style="left:1227.50px;top:632.41px;font-size:16.81px;line-height:16.81px;font-weight:400;color:#5a6472;">-</div>
<div class="t" style="left:1331.00px;top:632.41px;font-size:16.81px;line-height:16.81px;font-weight:400;color:#5a6472;transform:scaleX(0.9247);transform-origin:0 0;">-27.5000</div>
<div class="t" style="left:631.10px;top:666.70px;font-size:16.81px;line-height:16.81px;font-weight:400;color:#4b5868;transform:scaleX(0.9022);transform-origin:0 0;">Payment</div>
<div class="t" style="left:1069.00px;top:666.70px;font-size:16.81px;line-height:16.81px;font-weight:400;color:#5a6472;">-</div>
<div class="t" style="left:1227.50px;top:666.70px;font-size:16.81px;line-height:16.81px;font-weight:400;color:#5a6472;">-</div>
<div class="t" style="left:1323.00px;top:666.70px;font-size:16.81px;line-height:16.81px;font-weight:400;color:#5a6472;transform:scaleX(0.9162);transform-origin:0 0;">-278.1300</div>
<div class="t" style="left:631.10px;top:701.00px;font-size:16.81px;line-height:16.81px;font-weight:400;color:#4b5868;transform:scaleX(0.8996);transform-origin:0 0;">Payment (Bank Transfer)</div>
<div class="t" style="left:1069.00px;top:701.00px;font-size:16.81px;line-height:16.81px;font-weight:400;color:#5a6472;">-</div>
<div class="t" style="left:1227.50px;top:701.00px;font-size:16.81px;line-height:16.81px;font-weight:400;color:#5a6472;">-</div>
<div class="t" style="left:1340.00px;top:701.00px;font-size:16.81px;line-height:16.81px;font-weight:400;color:#5a6472;transform:scaleX(0.9183);transform-origin:0 0;">-5.5500</div>
<div class="t" style="left:631.10px;top:735.31px;font-size:16.81px;line-height:16.81px;font-weight:400;color:#4b5868;transform:scaleX(0.8951);transform-origin:0 0;">Payment (Cash)</div>
<div class="t" style="left:1069.00px;top:735.31px;font-size:16.81px;line-height:16.81px;font-weight:400;color:#5a6472;">-</div>
<div class="t" style="left:1227.50px;top:735.31px;font-size:16.81px;line-height:16.81px;font-weight:400;color:#5a6472;">-</div>
<div class="t" style="left:1302.00px;top:735.31px;font-size:16.81px;line-height:16.81px;font-weight:400;color:#5a6472;transform:scaleX(0.9122);transform-origin:0 0;">-66,150.6200</div>
<div class="t" style="left:631.08px;top:769.61px;font-size:16.81px;line-height:16.81px;font-weight:400;color:#4b5868;transform:scaleX(0.9181);transform-origin:0 0;">Payment (Credit Card)</div>
<div class="t" style="left:1069.00px;top:769.61px;font-size:16.81px;line-height:16.81px;font-weight:400;color:#5a6472;">-</div>
<div class="t" style="left:1227.50px;top:769.61px;font-size:16.81px;line-height:16.81px;font-weight:400;color:#5a6472;">-</div>
<div class="t" style="left:1323.00px;top:769.61px;font-size:16.81px;line-height:16.81px;font-weight:400;color:#5a6472;transform:scaleX(0.9162);transform-origin:0 0;">-216.0000</div>
<div class="t" style="left:631.12px;top:803.91px;font-size:16.81px;line-height:16.81px;font-weight:400;color:#4b5868;transform:scaleX(0.8788);transform-origin:0 0;">Rate</div>
<div class="t" style="left:1069.00px;top:803.91px;font-size:16.81px;line-height:16.81px;font-weight:400;color:#5a6472;">-</div>
<div class="t" style="left:1178.80px;top:803.91px;font-size:16.81px;line-height:16.81px;font-weight:400;color:#5a6472;transform:scaleX(0.8894);transform-origin:0 0;">60.0000</div>
<div class="t" style="left:1308.10px;top:803.91px;font-size:16.81px;line-height:16.81px;font-weight:400;color:#5a6472;transform:scaleX(0.9015);transform-origin:0 0;">16,140.0000</div>
<div class="t" style="left:631.06px;top:838.20px;font-size:16.81px;line-height:16.81px;font-weight:400;color:#4b5868;transform:scaleX(0.9419);transform-origin:0 0;">Rate - Adjustment</div>
<div class="t" style="left:1069.00px;top:838.20px;font-size:16.81px;line-height:16.81px;font-weight:400;color:#5a6472;">-</div>
<div class="t" style="left:1227.50px;top:838.20px;font-size:16.81px;line-height:16.81px;font-weight:400;color:#5a6472;">-</div>
<div class="t" style="left:1337.00px;top:838.20px;font-size:16.81px;line-height:16.81px;font-weight:400;color:#5a6472;transform:scaleX(0.9110);transform-origin:0 0;">36.0000</div>
<div class="t" style="left:631.07px;top:872.50px;font-size:16.81px;line-height:16.81px;font-weight:400;color:#4b5868;transform:scaleX(0.9296);transform-origin:0 0;">Rate - Void</div>
<div class="t" style="left:1069.00px;top:872.50px;font-size:16.81px;line-height:16.81px;font-weight:400;color:#5a6472;">-</div>
<div class="t" style="left:1227.50px;top:872.50px;font-size:16.81px;line-height:16.81px;font-weight:400;color:#5a6472;">-</div>
<div class="t" style="left:1336.07px;top:872.50px;font-size:16.81px;line-height:16.81px;font-weight:400;color:#5a6472;transform:scaleX(0.9263);transform-origin:0 0;">10.0000</div>
<div class="t" style="left:711.00px;top:923.31px;font-size:20.29px;line-height:20.29px;font-weight:400;color:#2e3441;transform:scaleX(1.0226);transform-origin:0 0;">Totals</div>
<div class="t" style="left:894.98px;top:923.31px;font-size:20.29px;line-height:20.29px;font-weight:400;color:#c9c9c9;transform:scaleX(1.0195);transform-origin:0 0;">Details</div>
<div class="t" style="left:1070.00px;top:923.31px;font-size:20.29px;line-height:20.29px;font-weight:400;color:#2e3441;transform:scaleX(0.9924);transform-origin:0 0;">Transpose</div>
<div style="position:absolute;left:516.2px;top:802px;width:81.8px;height:79.7px;border-radius:50%;background:#f0545f"></div>
<div style="position:absolute;left:1906.2px;top:74px;width:81.8px;height:79.8px;border-radius:50%;background:#f0545f"></div>
<svg style="position:absolute;left:543px;top:928px" width="22" height="27" viewBox="0 0 30 40"><path d="M9 3.5 C9 1.8 12 1.8 12 3.5 L12 16 L12.5 12.5 C12.5 11 15.5 11 15.5 12.5 L15.5 16.5 L16 14 C16 12.5 19 12.5 19 14 L19 17.5 L19.5 16 C19.5 14.5 22.5 14.5 22.5 16 L22.5 26 C22.5 31 20 35 15 35 C11 35 9.5 33 7 29 L3 22.5 C2 21 4 19 6 20.5 L9 24 Z" fill="#fff" stroke="#222" stroke-width="1.8" stroke-linejoin="round"/></svg>
<div class="t" style="left:540.98px;top:816.71px;font-size:53.00px;line-height:53.00px;font-weight:400;color:#ffffff;transform:scaleX(1.0115);transform-origin:0 0;-webkit-text-stroke:1.2px #fff;">6</div>
<div class="t" style="left:1930.84px;top:90.00px;font-size:51.50px;line-height:51.50px;font-weight:400;color:#ffffff;transform:scaleX(1.0800);transform-origin:0 0;-webkit-text-stroke:1.2px #fff;">7</div>
</div></body></html>
